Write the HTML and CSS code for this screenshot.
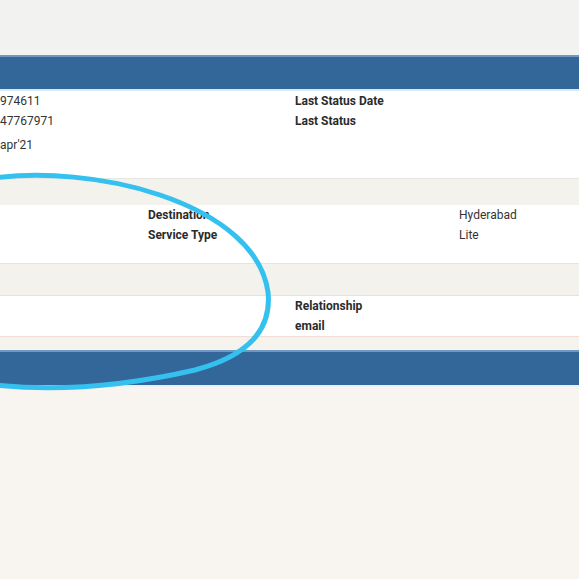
FILE: index.html
```html
<!DOCTYPE html>
<html>
<head>
<meta charset="utf-8">
<link rel="stylesheet" href="styles.css">
</head>
<body>
<div class="page">
  <div class="topgap"></div>
  <div class="panel">
    <div class="bar"></div>
    <div class="section s1">
      <div class="cell c0 val">974611</div>
      <div class="cell c2 lbl">Last Status Date</div>
      <div class="cell c0 val">47767971</div>
      <div class="cell c2 lbl">Last Status</div>
      <div class="cell c0 val extra">apr'21</div>
    </div>
    <div class="strip s2"></div>
    <div class="section s3">
      <div class="cell c1 lbl">Destination</div>
      <div class="cell c3 val">Hyderabad</div>
      <div class="cell c1 lbl">Service Type</div>
      <div class="cell c3 val">Lite</div>
    </div>
    <div class="strip s4"></div>
    <div class="section s5">
      <div class="cell c2 lbl">Relationship</div>
      <div class="cell c2 lbl">email</div>
    </div>
    <div class="strip s6"></div>
    <div class="bar bar2"></div>
  </div>
  <svg class="scribble" width="579" height="579" viewBox="0 0 579 579">
    <path d="M -6 178 C 40 172, 105 176, 160 195 C 222 216, 262 250, 268 292 C 272 330, 248 356, 195 370 C 130 385, 60 392, -6 385" fill="none" stroke="#35c1ef" stroke-width="5" stroke-linecap="round"/>
  </svg>
</div>
</body>
</html>
```

FILE: styles.css
```css
html, body {
  margin: 0;
  padding: 0;
}
body {
  background: #f8f4f0;
  font-family: Roboto, "Noto Sans", sans-serif;
  font-size: 12px;
  width: 579px;
  height: 579px;
  overflow: hidden;
}
.page {
  position: relative;
  width: 579px;
  height: 579px;
}
.topgap {
  height: 55px;
  background: #f2f2f0;
}
.panel {
  display: flex;
  flex-direction: column;
}
.bar {
  height: 32px;
  background: #336699;
  border-top: 2px solid #6f98c2;
  border-bottom: 2px solid #dbe9f4;
}
.bar2 {
  height: 33px;
  border-bottom: 2px solid #e9f1f4;
}
.section {
  background: #ffffff;
  display: grid;
  grid-template-columns: 148px 147px 164px 1fr;
  grid-auto-rows: 20px;
  align-content: start;
}
.cell {
  line-height: 20px;
  white-space: nowrap;
}
.c0 { grid-column: 1; }
.c1 { grid-column: 2; }
.c2 { grid-column: 3; }
.c3 { grid-column: 4; }
.extra { margin-top: 4px; }
.lbl {
  font-weight: 700;
  color: #2b2b2b;
}
.val {
  color: #333333;
}
.s1 { height: 87px; }
.s3 { height: 58px; }
.s5 { height: 40px; }
.strip {
  background: #f3f2ed;
}
.s2 {
  height: 26px;
  border-top: 1px solid #e6e6e4;
}
.s4 {
  height: 31px;
  border-top: 1px solid #e4e4e2;
  border-bottom: 1px solid #e2e2e0;
}
.s6 {
  height: 13px;
  background: #f4f3ee;
  border-top: 1px solid #f2dcd6;
}
.scribble {
  position: absolute;
  left: 0;
  top: 0;
  pointer-events: none;
}
```
